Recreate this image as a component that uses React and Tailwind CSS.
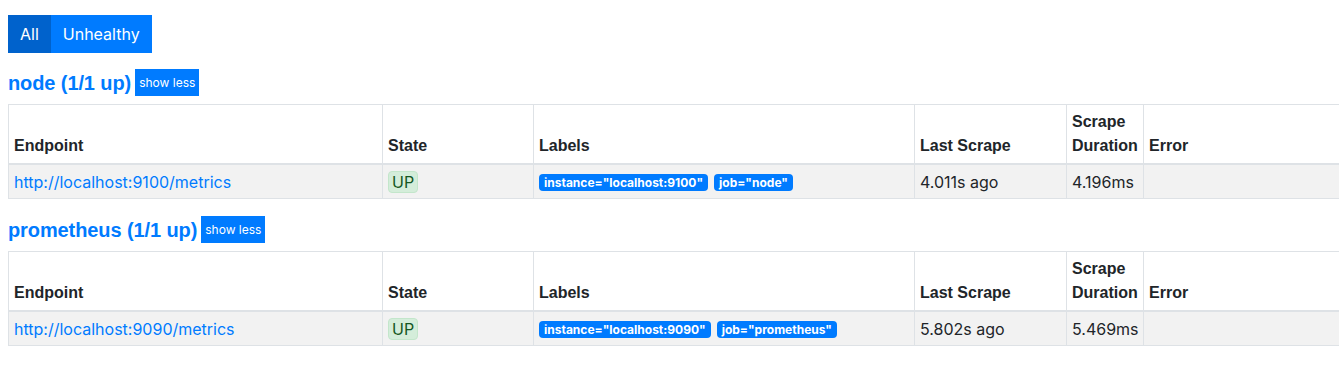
import React from 'react';

const targets = [
  {
    job: 'node',
    endpoint: 'http://localhost:9100/metrics',
    labels: ['instance="localhost:9100"', 'job="node"'],
    lastScrape: '4.011s ago',
    duration: '4.196ms',
  },
  {
    job: 'prometheus',
    endpoint: 'http://localhost:9090/metrics',
    labels: ['instance="localhost:9090"', 'job="prometheus"'],
    lastScrape: '5.802s ago',
    duration: '5.469ms',
  },
];

const th = "border border-[#dee2e6] border-b-2 p-[5px] align-bottom text-left font-bold leading-6 font-['Liberation_Sans',Arial,sans-serif]";
const td = 'border border-[#dee2e6] px-[5px] pt-[5px] pb-[4px] align-top leading-6';

function Pool({ t }) {
  return (
    <div>
      <div className="flex items-center gap-[4px]">
        <h3 className="text-[20px] font-bold text-[#007bff] leading-6 tracking-[-0.1px] font-['Liberation_Sans',Arial,sans-serif]">
          {t.job} (1/1 up)
        </h3>
        <button className="bg-[#007bff] text-white text-[12px] h-[27px] px-[4px] leading-none">
          show less
        </button>
      </div>
      <table className="mt-2 border-collapse table-fixed w-[1420px] text-[16px] text-[#212529]">
        <colgroup>
          <col className="w-[374px]" />
          <col className="w-[151px]" />
          <col className="w-[381px]" />
          <col className="w-[152px]" />
          <col className="w-[77px]" />
          <col />
        </colgroup>
        <thead>
          <tr>
            <th className={th}>Endpoint</th>
            <th className={th}>State</th>
            <th className={th}>Labels</th>
            <th className={th}>Last Scrape</th>
            <th className={th}>Scrape Duration</th>
            <th className={th}>Error</th>
          </tr>
        </thead>
        <tbody>
          <tr className="bg-[#f2f2f2]">
            <td className={td}>
              <a href="#" className="text-[#007bff]">{t.endpoint}</a>
            </td>
            <td className={td}>
              <span className="inline-block rounded-[4px] border border-[#c3e6cb] bg-[#d4edda] text-[#155724] px-[3px] leading-5">
                UP
              </span>
            </td>
            <td className={td}>
              <div className="flex gap-[6px] pt-[4px]">
                {t.labels.map((l) => (
                  <span
                    key={l}
                    className="inline-block rounded-[4px] bg-[#007bff] text-white text-[12px] font-bold px-[5px] leading-[17px]"
                  >
                    {l}
                  </span>
                ))}
              </div>
            </td>
            <td className={td}>{t.lastScrape}</td>
            <td className={td}>{t.duration}</td>
            <td className={td}></td>
          </tr>
        </tbody>
      </table>
    </div>
  );
}

export default function App() {
  return (
    <div className="w-[1339px] h-[369px] overflow-hidden bg-white pl-2 pt-[15px] font-['Inter','Liberation_Sans',sans-serif]">
      <div className="flex">
        <button className="bg-[#0062cc] text-white text-[16px] h-[38px] px-3">All</button>
        <button className="bg-[#007bff] text-white text-[16px] h-[38px] px-3">Unhealthy</button>
      </div>
      <div className="mt-4 flex flex-col gap-[17px]">
        {targets.map((t) => (
          <Pool key={t.job} t={t} />
        ))}
      </div>
    </div>
  );
}
